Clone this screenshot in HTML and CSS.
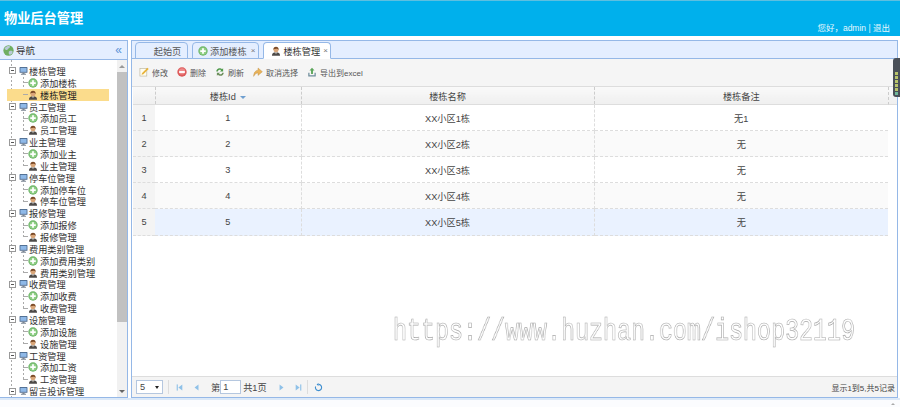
FILE: index.html
```html
<!DOCTYPE html>
<html lang="zh-CN">
<head>
    <meta charset="UTF-8">
    <title>物业后台管理</title>
    <link rel="stylesheet" href="styles.css">
</head>
<body>

<svg class="icon-defs" width="0" height="0">
    <symbol id="i-add" viewBox="0 0 16 16">
        <circle cx="8" cy="8" r="7.500" fill="#6fb56a"/>
        <circle cx="8" cy="8" r="5.800" fill="#8fcf85"/>
        <path d="M6.600 3.600h2.800v3h3v2.800h-3v3H6.600v-3h-3V6.600h3z" fill="#fff"/>
    </symbol>
    <symbol id="i-user" viewBox="0 0 16 16">
        <path d="M1.500 15.500c0-4 2.500-5.500 6.500-5.500s6.500 1.500 6.500 5.500z" fill="#4d4a48"/>
        <path d="M6.500 10l1.500 3 1.500-3z" fill="#e8e4dc"/>
        <circle cx="8" cy="6" r="4" fill="#d9a679"/>
        <path d="M3.800 6.200C3.500 2.500 5.500 1 8 1s4.500 1.500 4.200 5.200C11 4.500 9.500 4 8 4.500 6.500 5 4.800 4.800 3.800 6.200z" fill="#7b4a27"/>
    </symbol>
    <symbol id="i-pc" viewBox="0 0 16 16">
        <rect x="1" y="1" width="14" height="10" rx="1" fill="#4e6a8e"/>
        <rect x="2.500" y="2.500" width="11" height="7" fill="#8fb9e8"/>
        <path d="M6 11h4v2h2.500v1.500h-9V13H6z" fill="#7c8794"/>
    </symbol>
    <symbol id="i-globe" viewBox="0 0 16 16">
        <circle cx="8" cy="8" r="7.500" fill="#6fae62"/>
        <path d="M3 4c2-2 5-3 7-2 1 1-1 2-2 3S6 8 4 7 2 5 3 4zM9 9c2-1 5-1 5 1s-2 4-4 4-2-4-1-5z" fill="#b8c9d8"/>
    </symbol>
    <symbol id="i-edit" viewBox="0 0 16 16">
        <rect x="1.500" y="2.500" width="11" height="12" fill="#fffdf0" stroke="#b9b39a"/>
        <path d="M13.500 1l2 2L7 11.500l-3 1 1-3z" fill="#e8b33a"/>
    </symbol>
    <symbol id="i-del" viewBox="0 0 16 16">
        <circle cx="8" cy="8" r="7.500" fill="#dd5a5a"/>
        <circle cx="8" cy="7" r="5" fill="#ee8a8a"/>
        <rect x="3.500" y="6.500" width="9" height="3" fill="#fff"/>
    </symbol>
    <symbol id="i-reload" viewBox="0 0 16 16">
        <path d="M2 7c0-3 3-5.500 6-5 1.500 0 2.500.7 3.200 1.500L13 2v5H8l1.800-1.700C8 3.800 5 4.500 4.500 7z" fill="#4f9a4a"/>
        <path d="M14 9c0 3-3 5.500-6 5-1.500 0-2.500-.7-3.200-1.500L3 14V9h5l-1.800 1.700C8 12.200 11 11.500 11.500 9z" fill="#6d8f5c"/>
    </symbol>
    <symbol id="i-undo" viewBox="0 0 16 16">
        <path d="M1 15C1 9 4 5.500 8 5V1.500l7 6-7 6V9.500c-3 0-5 2-7 5.500z" fill="#e9b35a" stroke="#b98a3c" stroke-width=".6"/>
    </symbol>
    <symbol id="i-export" viewBox="0 0 16 16">
        <path d="M8 1l4 4.500H9.500V11h-3V5.500H4z" fill="#5ba55a"/>
        <path d="M2 9h2v4h8V9h2v6H2z" fill="#6f8d9c"/>
    </symbol>
    <symbol id="i-first" viewBox="0 0 16 16">
        <rect x="3" y="2.500" width="2" height="11" fill="#8fc1e8"/>
        <path d="M13 2.500v11L6 8z" fill="#8fc1e8"/>
    </symbol>
    <symbol id="i-prev" viewBox="0 0 16 16">
        <path d="M11.500 2.500v11L4.500 8z" fill="#8fc1e8"/>
    </symbol>
    <symbol id="i-next" viewBox="0 0 16 16">
        <path d="M4.500 2.500v11l7-5.500z" fill="#8fc1e8"/>
    </symbol>
    <symbol id="i-last" viewBox="0 0 16 16">
        <rect x="11" y="2.500" width="2" height="11" fill="#8fc1e8"/>
        <path d="M3 2.500v11L10 8z" fill="#8fc1e8"/>
    </symbol>
    <symbol id="i-loop" viewBox="0 0 16 16">
        <path d="M8 2.500a5.500 5.500 0 1 1-5.200 3.700" fill="none" stroke="#3f8fd0" stroke-width="2"/>
        <path d="M8 0v5.500L4.500 2.700z" fill="#3f8fd0"/>
    </symbol>
</svg>

<header class="top">
    <h1>物业后台管理</h1>
    <p class="welcome">您好，admin | 退出</p>
</header>

<div class="layout">
    <aside class="nav">
        <div class="nav-title">
            <svg class="ico globe"><use href="#i-globe"/></svg>
            <span>导航</span>
            <span class="collapse">«</span>
        </div>
        <div class="nav-body">
            <div class="tree">
                <div class="group">
                    <div class="node"><i class="toggle"></i><svg class="ico"><use href="#i-pc"/></svg><span>楼栋管理</span></div>
                    <div class="kids">
                        <div class="leaf"><i class="dash"></i><svg class="ico"><use href="#i-add"/></svg><span>添加楼栋</span></div>
                        <div class="leaf current"><i class="dash"></i><svg class="ico"><use href="#i-user"/></svg><span>楼栋管理</span></div>
                    </div>
                </div>
                <div class="group">
                    <div class="node"><i class="toggle"></i><svg class="ico"><use href="#i-pc"/></svg><span>员工管理</span></div>
                    <div class="kids">
                        <div class="leaf"><i class="dash"></i><svg class="ico"><use href="#i-add"/></svg><span>添加员工</span></div>
                        <div class="leaf"><i class="dash"></i><svg class="ico"><use href="#i-user"/></svg><span>员工管理</span></div>
                    </div>
                </div>
                <div class="group">
                    <div class="node"><i class="toggle"></i><svg class="ico"><use href="#i-pc"/></svg><span>业主管理</span></div>
                    <div class="kids">
                        <div class="leaf"><i class="dash"></i><svg class="ico"><use href="#i-add"/></svg><span>添加业主</span></div>
                        <div class="leaf"><i class="dash"></i><svg class="ico"><use href="#i-user"/></svg><span>业主管理</span></div>
                    </div>
                </div>
                <div class="group">
                    <div class="node"><i class="toggle"></i><svg class="ico"><use href="#i-pc"/></svg><span>停车位管理</span></div>
                    <div class="kids">
                        <div class="leaf"><i class="dash"></i><svg class="ico"><use href="#i-add"/></svg><span>添加停车位</span></div>
                        <div class="leaf"><i class="dash"></i><svg class="ico"><use href="#i-user"/></svg><span>停车位管理</span></div>
                    </div>
                </div>
                <div class="group">
                    <div class="node"><i class="toggle"></i><svg class="ico"><use href="#i-pc"/></svg><span>报修管理</span></div>
                    <div class="kids">
                        <div class="leaf"><i class="dash"></i><svg class="ico"><use href="#i-add"/></svg><span>添加报修</span></div>
                        <div class="leaf"><i class="dash"></i><svg class="ico"><use href="#i-user"/></svg><span>报修管理</span></div>
                    </div>
                </div>
                <div class="group">
                    <div class="node"><i class="toggle"></i><svg class="ico"><use href="#i-pc"/></svg><span>费用类别管理</span></div>
                    <div class="kids">
                        <div class="leaf"><i class="dash"></i><svg class="ico"><use href="#i-add"/></svg><span>添加费用类别</span></div>
                        <div class="leaf"><i class="dash"></i><svg class="ico"><use href="#i-user"/></svg><span>费用类别管理</span></div>
                    </div>
                </div>
                <div class="group">
                    <div class="node"><i class="toggle"></i><svg class="ico"><use href="#i-pc"/></svg><span>收费管理</span></div>
                    <div class="kids">
                        <div class="leaf"><i class="dash"></i><svg class="ico"><use href="#i-add"/></svg><span>添加收费</span></div>
                        <div class="leaf"><i class="dash"></i><svg class="ico"><use href="#i-user"/></svg><span>收费管理</span></div>
                    </div>
                </div>
                <div class="group">
                    <div class="node"><i class="toggle"></i><svg class="ico"><use href="#i-pc"/></svg><span>设施管理</span></div>
                    <div class="kids">
                        <div class="leaf"><i class="dash"></i><svg class="ico"><use href="#i-add"/></svg><span>添加设施</span></div>
                        <div class="leaf"><i class="dash"></i><svg class="ico"><use href="#i-user"/></svg><span>设施管理</span></div>
                    </div>
                </div>
                <div class="group">
                    <div class="node"><i class="toggle"></i><svg class="ico"><use href="#i-pc"/></svg><span>工资管理</span></div>
                    <div class="kids">
                        <div class="leaf"><i class="dash"></i><svg class="ico"><use href="#i-add"/></svg><span>添加工资</span></div>
                        <div class="leaf"><i class="dash"></i><svg class="ico"><use href="#i-user"/></svg><span>工资管理</span></div>
                    </div>
                </div>
                <div class="group">
                    <div class="node"><i class="toggle"></i><svg class="ico"><use href="#i-pc"/></svg><span>留言投诉管理</span></div>
                </div>
            </div>
            <div class="scrollbar">
                <span class="arrow-up"></span>
                <span class="thumb"></span>
                <span class="arrow-down"></span>
            </div>
        </div>
    </aside>

    <main class="content">
        <div class="tabs">
            <div class="tab tab-home">起始页</div>
            <div class="tab"><svg class="ico"><use href="#i-add"/></svg>添加楼栋<span class="close">×</span></div>
            <div class="tab active"><svg class="ico"><use href="#i-user"/></svg>楼栋管理<span class="close">×</span></div>
        </div>

        <div class="toolbar">
            <a class="tool"><svg class="ico"><use href="#i-edit"/></svg>修改</a>
            <a class="tool"><svg class="ico"><use href="#i-del"/></svg>删除</a>
            <a class="tool"><svg class="ico"><use href="#i-reload"/></svg>刷新</a>
            <a class="tool"><svg class="ico"><use href="#i-undo"/></svg>取消选择</a>
            <a class="tool"><svg class="ico"><use href="#i-export"/></svg>导出到excel</a>
        </div>

        <div class="grid-wrap">
            <table class="grid">
                <colgroup>
                    <col class="col-num"><col class="col-id"><col class="col-name"><col class="col-note">
                </colgroup>
                <thead>
                    <tr><th></th><th>楼栋Id <i class="sort"></i></th><th>楼栋名称</th><th>楼栋备注</th></tr>
                </thead>
                <tbody>
                    <tr><td class="num">1</td><td>1</td><td>XX小区1栋</td><td>无1</td></tr>
                    <tr class="even"><td class="num">2</td><td>2</td><td>XX小区2栋</td><td>无</td></tr>
                    <tr><td class="num">3</td><td>3</td><td>XX小区3栋</td><td>无</td></tr>
                    <tr class="even"><td class="num">4</td><td>4</td><td>XX小区4栋</td><td>无</td></tr>
                    <tr class="selected"><td class="num">5</td><td>5</td><td>XX小区5栋</td><td>无</td></tr>
                </tbody>
            </table>
            <div class="head-filler"></div>
        </div>

        <div class="pager">
            <div class="page-size"><span>5</span><i class="caret"></i></div>
            <i class="sep"></i>
            <svg class="pg pg-first"><use href="#i-first"/></svg>
            <svg class="pg pg-prev"><use href="#i-prev"/></svg>
            <span class="pg-label">第</span>
            <span class="page-input">1</span>
            <span>共1页</span>
            <svg class="pg pg-next"><use href="#i-next"/></svg>
            <svg class="pg pg-last"><use href="#i-last"/></svg>
            <i class="sep"></i>
            <svg class="pg pg-loop"><use href="#i-loop"/></svg>
            <span class="pg-info">显示1到5,共5记录</span>
        </div>
    </main>
</div>

<div class="status"><i class="status-arrow"></i></div>

<div class="gadget"><i></i><i></i><i></i><i></i><i></i><i></i></div>
<div class="watermark">https://www.huzhan.com/ishop32119</div>

</body>
</html>
```

FILE: styles.css
```css
html, body {
    margin: 0;
    height: 100%;
    overflow: hidden;
}

body {
    position: relative;
    display: flex;
    flex-direction: column;
    background: #fff;
    font-family: "Liberation Sans", "Noto Sans CJK SC", sans-serif;
    font-size: 9.200px;
    color: #444;
}

.icon-defs {
    position: absolute;
}

.ico {
    width: 10px;
    height: 10px;
    flex: none;
}

/* top banner */
.top {
    flex: none;
    height: 36px;
    box-sizing: border-box;
    display: flex;
    justify-content: space-between;
    padding: 10px 10px 0 4px;
    background: #00b0ec;
    border-top: 1px solid #5dbfe0;
    color: #fff;
}

.top h1 {
    margin: 0;
    font-size: 13.200px;
    line-height: 16px;
    font-weight: 700;
}

.welcome {
    margin: 0;
    align-self: flex-end;
    font-size: 8.500px;
    line-height: 12px;
    padding-bottom: 2px;
    color: #e6f7fd;
}

.layout {
    flex: 1;
    min-height: 0;
    display: flex;
    gap: 3px;
    padding: 4px 0 0;
}

/* left nav */
.nav {
    width: 128px;
    flex: none;
    box-sizing: border-box;
    display: flex;
    flex-direction: column;
    border: 1px solid #95b8e7;
    border-left: 0;
}

.nav-title {
    flex: none;
    height: 18px;
    display: flex;
    align-items: center;
    gap: 2px;
    padding: 0 5px 0 3px;
    background: #e4eeff;
    border-bottom: 1px solid #95b8e7;
    font-size: 9.500px;
    color: #333;
}

.nav-title .globe {
    width: 11px;
    height: 11px;
}

.nav-title .collapse {
    margin-left: auto;
    font-size: 12px;
    line-height: 12px;
    color: #5b94d6;
}

.nav-body {
    flex: 1;
    min-height: 0;
    display: flex;
}

.tree {
    flex: 1;
    min-width: 0;
    overflow: hidden;
    padding-top: 5px;
    color: #333;
    background: repeating-linear-gradient(#aaa 0 2px, transparent 2px 4px) 11px 0 / 1px 100% no-repeat;
}

.node, .leaf {
    height: 11.870px;
    display: flex;
    align-items: center;
    white-space: nowrap;
}

.node {
    padding-left: 9px;
}

.toggle {
    width: 5px;
    height: 5px;
    flex: none;
    margin-right: 3px;
    border: 1px solid #999;
    background: #fff linear-gradient(#555, #555) center / 3px 1px no-repeat;
}

.node .ico {
    width: 9px;
    margin-right: 1px;
}

.kids {
    background: repeating-linear-gradient(#aaa 0 2px, transparent 2px 4px) 23px 0 / 1px 18px no-repeat;
}

.leaf {
    margin-left: 7px;
    width: 102px;
    padding-left: 16px;
    box-sizing: border-box;
}

.leaf .dash {
    width: 5px;
    flex: none;
    border-top: 1px dashed #aaa;
}

.leaf .ico {
    margin-right: 2px;
}

.leaf.current {
    background: #fbdc8c;
    color: #222;
}

.scrollbar {
    width: 10px;
    flex: none;
    display: flex;
    flex-direction: column;
    background: #f1f1f1;
}

.arrow-up, .arrow-down {
    flex: none;
    height: 12px;
    display: flex;
    justify-content: center;
    align-items: center;
}

.arrow-down {
    margin-top: auto;
}

.arrow-up::after {
    content: "";
    border: 3px solid transparent;
    border-top: 0;
    border-bottom: 3px solid #999;
}

.arrow-down::after {
    content: "";
    border: 3px solid transparent;
    border-bottom: 0;
    border-top: 3px solid #666;
}

.thumb {
    height: 250px;
    background: #c1c1c1;
}

/* right content */
.content {
    flex: 1;
    min-width: 0;
    margin-right: 2px;
    display: flex;
    flex-direction: column;
    border: 1px solid #95b8e7;
}

.tabs {
    flex: none;
    height: 18px;
    box-sizing: border-box;
    display: flex;
    align-items: flex-end;
    gap: 4px;
    padding-left: 3px;
    background: #e4eeff;
    border-bottom: 1px solid #95b8e7;
}

.tab {
    height: 17px;
    box-sizing: border-box;
    display: flex;
    align-items: center;
    gap: 2px;
    margin-bottom: -1px;
    padding: 0 3px 0 5px;
    border: 1px solid #95b8e7;
    border-radius: 4px 4px 0 0;
    background: #e4eeff;
    color: #555;
}

.tab-home {
    width: 53px;
    justify-content: center;
    padding: 0 0 0 12px;
}

.tab.active {
    width: 68px;
    background: #fff;
    border-bottom-color: #fff;
    color: #333;
    padding: 0 0 0 7px;
}

.tab.active .close {
    margin-left: 1px;
}

.close {
    color: #777;
    font-size: 8px;
    margin-left: 2px;
}

.toolbar {
    flex: none;
    height: 28px;
    box-sizing: border-box;
    display: flex;
    align-items: center;
    gap: 9px;
    padding: 0 0 1px 7px;
    background: #f5f5f5;
    border-bottom: 1px solid #ddd;
    font-size: 8px;
    color: #555;
}

.tool {
    display: flex;
    align-items: center;
    gap: 3px;
}

.grid-wrap {
    flex: 1;
    min-height: 0;
    display: flex;
    align-items: flex-start;
    background: #fff;
}

.grid {
    width: 755px;
    flex: none;
    margin-left: 1px;
    table-layout: fixed;
    border-collapse: collapse;
}

.col-num { width: 22px; }
.col-id { width: 146px; }
.col-name { width: 293px; }

.grid th {
    height: 17px;
    padding: 0;
    font-weight: 400;
    color: #444;
    background: linear-gradient(#f9f9f9, #efefef);
    border-right: 1px dashed #ccc;
    border-bottom: 1px solid #ddd;
}

.grid th:last-child, .grid td:last-child {
    border-right: 0;
}

.grid td {
    height: 25px;
    padding: 0;
    text-align: center;
    border-right: 1px dashed #ddd;
    border-bottom: 1px dashed #ddd;
    color: #444;
}

.grid .selected td {
    height: 26px;
}

.grid .num {
    background: #f4f4f4;
    border-right: 0;
    border-bottom-color: #ddd;
}

.grid .even td:not(.num) {
    background: #fafafa;
}

.grid .selected td:not(.num) {
    background: #eaf2ff;
}

.sort {
    display: inline-block;
    margin-left: 2px;
    vertical-align: middle;
    border: 3px solid transparent;
    border-bottom: 0;
    border-top: 3px solid #6f9fd0;
}

.head-filler {
    flex: 1;
    height: 17px;
    background: linear-gradient(#f9f9f9, #efefef);
    border-left: 1px dashed #ccc;
    border-bottom: 1px solid #ddd;
}

/* pager */
.pager {
    flex: none;
    height: 21px;
    box-sizing: border-box;
    display: flex;
    align-items: center;
    padding-left: 4px;
    background: #f4f4f4;
    border-top: 1px solid #ddd;
    color: #444;
}

.page-size {
    width: 27px;
    height: 14px;
    box-sizing: border-box;
    display: flex;
    align-items: center;
    justify-content: space-between;
    padding: 0 3px;
    background: #fff;
    border: 1px solid #b5c7df;
}

.caret {
    border: 2.500px solid transparent;
    border-bottom: 0;
    border-top: 3px solid #222;
}

.sep {
    width: 1px;
    height: 14px;
    margin: 0 5px;
    background: #ddd;
}

.pg {
    width: 9px;
    height: 9px;
    flex: none;
}

.pg-first { margin-left: 1px; }
.pg-prev { margin-left: 8px; }
.pg-label { margin-left: 10px; margin-right: 0; }
.pg-next { margin-left: 10px; }
.pg-last { margin-left: 8px; margin-right: -1px; }
.pg-loop { margin-left: 1px; }

.page-input {
    width: 21px;
    height: 14px;
    box-sizing: border-box;
    margin-right: 2px;
    padding-left: 2px;
    line-height: 12px;
    background: #fff;
    border: 1px solid #b5c7df;
}

.pg-info {
    margin-left: auto;
    padding-right: 2px;
    font-size: 8px;
}

.status {
    flex: none;
    height: 9px;
    display: flex;
    justify-content: flex-end;
    align-items: center;
    padding-right: 5px;
    background: linear-gradient(#dce9f8 0 2px, #fbfcfe 2px);
}

.status-arrow {
    margin-top: 3px;
    border: 2px solid transparent;
    border-top: 0;
    border-bottom: 2px solid #aaa;
}

/* floating extras */
.gadget {
    position: absolute;
    right: 0;
    top: 58px;
    width: 7px;
    height: 39px;
    box-sizing: border-box;
    padding: 14px 2px 0 2px;
    background: #4a5058;
    border-radius: 3px 0 0 3px;
}

.gadget i {
    display: block;
    height: 3px;
    margin-bottom: 1px;
    background: #b9c46a;
}

.gadget i:last-child {
    background: #6fb79a;
}

.watermark {
    position: absolute;
    left: 393px;
    top: 314px;
    font-family: "Liberation Mono", monospace;
    font-size: 32px;
    line-height: 36px;
    white-space: nowrap;
    color: transparent;
    -webkit-text-stroke: 0.7px #a8a8a8;
    transform: scaleX(0.729);
    transform-origin: left top;
    will-change: transform;
}
```
